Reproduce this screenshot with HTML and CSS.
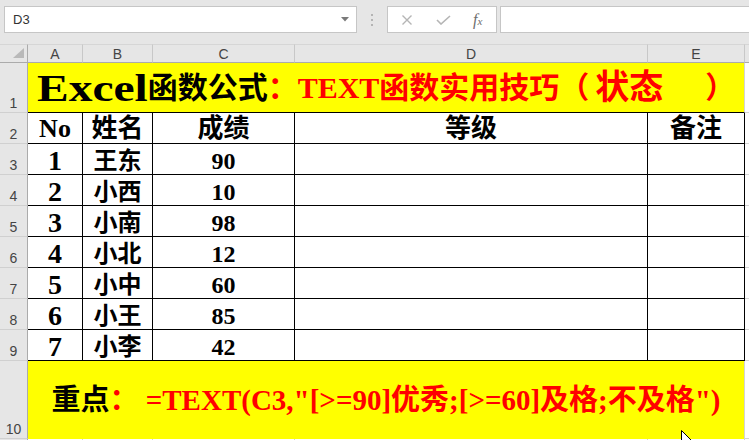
FILE: index.html
```html
<!DOCTYPE html>
<html>
  <head>
    <title>TEXT函数实用技巧</title>
    <link rel="stylesheet" href="styles.css">
  </head>
  <body>
    <div class="toolbar">
      <div class="namebox">
        <span class="cellref">D3</span>
        <svg class="drop" width="8" height="5" viewBox="0 0 8 5">
          <polygon points="0,0 8,0 4,4.5" fill="#7a7a7a" />
        </svg>
      </div>
      <div class="grip"><i></i><i></i><i></i></div>
      <div class="fxbtns">
        <svg width="12" height="10" viewBox="0 0 12 10">
          <path d="M1.5 0.5 L10.5 9.5 M10.5 0.5 L1.5 9.5" stroke="#b5b5b5" stroke-width="1.4" fill="none" />
        </svg>
        <svg width="15" height="10" viewBox="0 0 15 10">
          <path d="M1 5 L5 9 L14 1" stroke="#b5b5b5" stroke-width="1.6" fill="none" />
        </svg>
        <span class="fx">f<small>x</small></span>
      </div>
      <div class="formula"></div>
    </div>

    <div class="sheet">
      <div class="corner">
        <svg width="11" height="10" viewBox="0 0 11 10">
          <polygon points="11,0 11,10 0,10" fill="#b9b9b9" />
        </svg>
      </div>
      <div class="colhead">A</div>
      <div class="colhead">B</div>
      <div class="colhead">C</div>
      <div class="colhead">D</div>
      <div class="colhead">E</div>
      <div class="colhead blank"></div>

      <!-- row 1 -->
      <div class="rowhead">1</div>
      <div class="cell title">
        <span class="excel">Excel</span><span>函数公式</span><span class="red">：TEXT函数实用技巧</span><span class="red open">（</span><span class="red state">状态</span><span class="red close">）</span>
      </div>
      <div class="cell spare"></div>

      <!-- row 2 -->
      <div class="rowhead">2</div>
      <div class="cell head">No</div>
      <div class="cell head">姓名</div>
      <div class="cell head">成绩</div>
      <div class="cell head">等级</div>
      <div class="cell head">备注</div>
      <div class="cell spare"></div>

      <div class="rowhead">3</div>
      <div class="cell no">1</div>
      <div class="cell name">王东</div>
      <div class="cell score">90</div>
      <div class="cell"></div>
      <div class="cell"></div>
      <div class="cell spare"></div>

      <div class="rowhead">4</div>
      <div class="cell no">2</div>
      <div class="cell name">小西</div>
      <div class="cell score">10</div>
      <div class="cell"></div>
      <div class="cell"></div>
      <div class="cell spare"></div>

      <div class="rowhead">5</div>
      <div class="cell no">3</div>
      <div class="cell name">小南</div>
      <div class="cell score">98</div>
      <div class="cell"></div>
      <div class="cell"></div>
      <div class="cell spare"></div>

      <div class="rowhead">6</div>
      <div class="cell no">4</div>
      <div class="cell name">小北</div>
      <div class="cell score">12</div>
      <div class="cell"></div>
      <div class="cell"></div>
      <div class="cell spare"></div>

      <div class="rowhead">7</div>
      <div class="cell no">5</div>
      <div class="cell name">小中</div>
      <div class="cell score">60</div>
      <div class="cell"></div>
      <div class="cell"></div>
      <div class="cell spare"></div>

      <div class="rowhead">8</div>
      <div class="cell no">6</div>
      <div class="cell name">小王</div>
      <div class="cell score">85</div>
      <div class="cell"></div>
      <div class="cell"></div>
      <div class="cell spare"></div>

      <div class="rowhead">9</div>
      <div class="cell no">7</div>
      <div class="cell name">小李</div>
      <div class="cell score">42</div>
      <div class="cell"></div>
      <div class="cell"></div>
      <div class="cell spare"></div>

      <!-- row 10 -->
      <div class="rowhead">10</div>
      <div class="cell note">
        <span>重点</span><span class="red">： =TEXT(C3,"[&gt;=90]优秀;[&gt;=60]及格;不及格")</span>
      </div>
      <div class="cell spare"></div>

      <div class="rowhead"></div>
      <div class="cell empty"></div>
      <div class="cell empty"></div>
      <div class="cell empty"></div>
      <div class="cell empty"></div>
      <div class="cell empty"></div>
      <div class="cell spare"></div>

      <svg class="pointer" width="14" height="20" viewBox="0 0 14 20">
        <path d="M0.5 0.5 L0.5 16 L4 12.5 L6.5 18.5 L9 17.5 L6.5 11.5 L11.5 11.5 Z" fill="#fff" stroke="#000" stroke-width="1" />
      </svg>
    </div>
  </body>
</html>
```

FILE: styles.css
```css
body {
  margin: 0;
  width: 749px;
  height: 440px;
  overflow: hidden;
  background-color: #e6e6e6;
  font-family: 'Liberation Sans', Arial, sans-serif;
}

.toolbar {
  display: flex;
  height: 44px;
  padding-top: 6px;
  box-sizing: border-box;
}

.namebox {
  display: flex;
  align-items: center;
  justify-content: space-between;
  width: 353px;
  height: 27px;
  margin-left: 4px;
  padding: 0 7px 0 8px;
  box-sizing: border-box;
  background-color: #fff;
  border: 1px solid #c6c6c6;
}

.cellref {
  font-size: 13px;
  color: #333;
}

.grip {
  display: flex;
  flex-direction: column;
  align-items: center;
  justify-content: center;
  gap: 3px;
  width: 30px;
  height: 27px;
}

.grip i {
  width: 2px;
  height: 2px;
  background-color: #b4b4b4;
}

.fxbtns {
  display: flex;
  align-items: center;
  width: 110px;
  height: 27px;
  padding-left: 13px;
  gap: 23px;
  box-sizing: border-box;
  background-color: #fff;
  border: 1px solid #c6c6c6;
}

.fx {
  font-family: 'Liberation Serif', serif;
  font-style: italic;
  font-size: 16px;
  color: #6e6e6e;
  margin-left: -1px;
}

.fx small {
  font-size: 11px;
}

.formula {
  flex: 1;
  height: 27px;
  margin-left: 3px;
  box-sizing: border-box;
  background-color: #fff;
  border: 1px solid #c6c6c6;
  border-right: none;
}

.sheet {
  position: relative;
  display: grid;
  grid-template-columns: 28px 55px 70px 142px 353px 97px 1fr;
  grid-template-rows: 19px 50px repeat(8, 31px) 78px 1fr;
  height: 396px;
  background-color: #fff;
}

.corner {
  display: flex;
  align-items: flex-end;
  justify-content: flex-end;
  padding: 0 3px 4px 0;
  background-color: #e6e6e6;
  border-right: 1px solid #ababab;
  border-bottom: 1px solid #ababab;
  border-top: 1px solid #d6d6d6;
}

.colhead {
  display: flex;
  align-items: center;
  justify-content: center;
  font-size: 14px;
  color: #444;
  background-color: #e6e6e6;
  border-right: 1px solid #c8c8c8;
  border-bottom: 1px solid #ababab;
  border-top: 1px solid #d6d6d6;
}

.colhead.blank {
  border-right: none;
}

.rowhead {
  display: flex;
  align-items: flex-end;
  justify-content: center;
  padding-bottom: 1px;
  font-size: 14px;
  color: #444;
  background-color: #e6e6e6;
  border-right: 1px solid #ababab;
  border-bottom: 1px solid #d0d0d0;
}

.cell {
  display: flex;
  align-items: center;
  justify-content: center;
  border-right: 1px solid #000;
  border-bottom: 1px solid #000;
  font-family: 'Liberation Serif', 'Noto Sans CJK SC', serif;
  font-weight: bold;
  color: #000;
  line-height: 1;
  white-space: nowrap;
}

.cell.spare,
.cell.empty {
  border-right: 1px solid #d4d4d4;
  border-bottom: 1px solid #d4d4d4;
}

.cell.spare {
  border-right: none;
}

.title {
  grid-column: 2 / 7;
  justify-content: flex-start;
  padding-left: 9px;
  background-color: #ffff00;
  border-right-color: #d4d4d4;
  font-size: 30px;
}

.title .excel {
  display: inline-block;
  font-size: 38px;
  transform: scaleX(1.25);
  transform-origin: left center;
  margin-right: 22px;
}

.title .open {
  margin-right: 6px;
}

.title .state {
  font-size: 34px;
}

.title .close {
  margin-left: 42px;
}

.red {
  color: #ff0000;
}

.head {
  font-size: 26px;
  padding-top: 2px;
}

.no {
  font-size: 28px;
  padding-top: 3px;
}

.name,
.score {
  font-size: 24px;
  padding-top: 3px;
}

.note {
  grid-column: 2 / 7;
  background-color: #ffff00;
  border-right-color: #d4d4d4;
  border-bottom: none;
  font-size: 29px;
}

.pointer {
  position: absolute;
  left: 681px;
  top: 386px;
}
```
